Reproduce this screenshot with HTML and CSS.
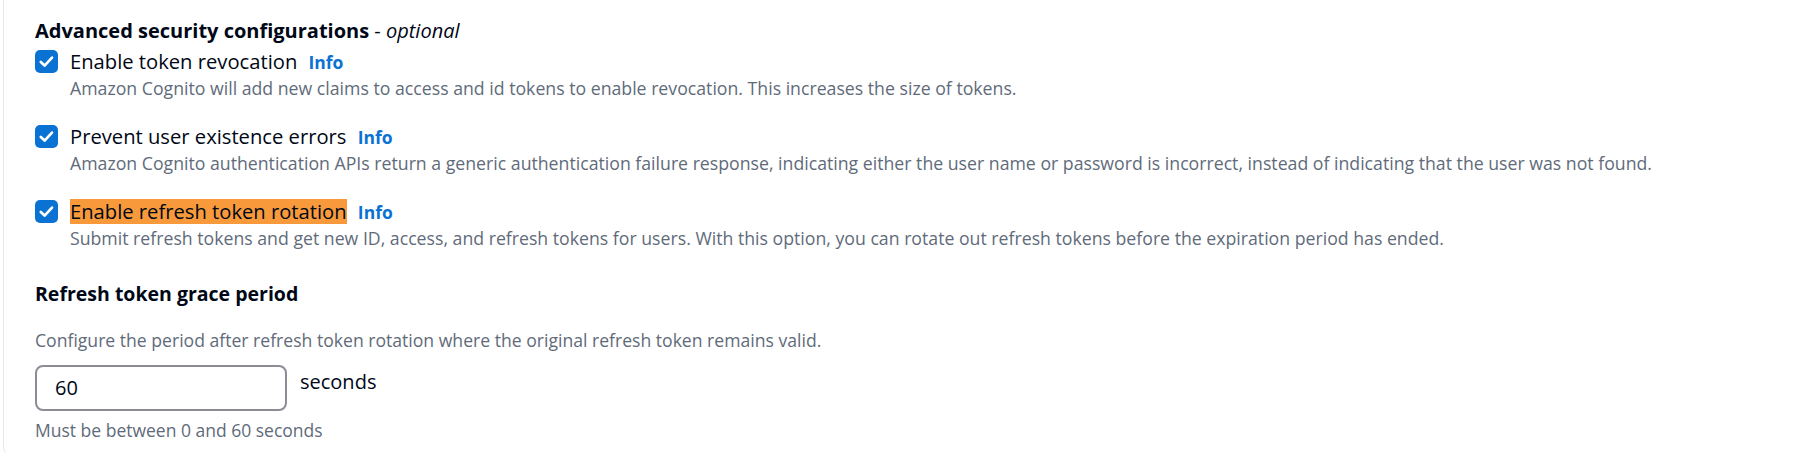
FILE: index.html
```html
<!DOCTYPE html>
<html>
<head>
<meta charset="utf-8">
<link rel="stylesheet" href="styles.css">
</head>
<body>
<div class="card">
  <div class="section-title"><b>Advanced security configurations</b> - <i>optional</i></div>

  <div class="option first">
    <span class="check"><svg viewBox="0 0 23 23" width="23" height="23"><path d="M5.8 12 L9.6 15.6 L17 7.6" fill="none" stroke="#fff" stroke-width="2.7" stroke-linecap="round" stroke-linejoin="round"/></svg></span>
    <div class="option-body">
      <div class="label">Enable token revocation <a class="info">Info</a></div>
      <div class="desc">Amazon Cognito will add new claims to access and id tokens to enable revocation. This increases the size of tokens.</div>
    </div>
  </div>

  <div class="option">
    <span class="check"><svg viewBox="0 0 23 23" width="23" height="23"><path d="M5.8 12 L9.6 15.6 L17 7.6" fill="none" stroke="#fff" stroke-width="2.7" stroke-linecap="round" stroke-linejoin="round"/></svg></span>
    <div class="option-body">
      <div class="label">Prevent user existence errors <a class="info">Info</a></div>
      <div class="desc">Amazon Cognito authentication APIs return a generic authentication failure response, indicating either the user name or password is incorrect, instead of indicating that the user was not found.</div>
    </div>
  </div>

  <div class="option">
    <span class="check"><svg viewBox="0 0 23 23" width="23" height="23"><path d="M5.8 12 L9.6 15.6 L17 7.6" fill="none" stroke="#fff" stroke-width="2.7" stroke-linecap="round" stroke-linejoin="round"/></svg></span>
    <div class="option-body">
      <div class="label"><span class="hl">Enable refresh token rotation</span> <a class="info">Info</a></div>
      <div class="desc">Submit refresh tokens and get new ID, access, and refresh tokens for users. With this option, you can rotate out refresh tokens before the expiration period has ended.</div>
    </div>
  </div>

  <div class="field">
    <div class="field-title">Refresh token grace period</div>
    <div class="field-desc">Configure the period after refresh token rotation where the original refresh token remains valid.</div>
    <div class="input-row">
      <div class="input">60</div>
      <span class="unit">seconds</span>
    </div>
    <div class="hint">Must be between 0 and 60 seconds</div>
  </div>
</div>
</body>
</html>
```

FILE: styles.css
```css
html, body {
  margin: 0;
  padding: 0;
  background: #ffffff;
}
body {
  font-family: "Open Sans", "Noto Sans", sans-serif;
  color: #000716;
}
.card {
  margin-left: 3px;
  border-left: 1px solid #e4e6e9;
  border-bottom: 1px solid transparent;
  border-bottom-left-radius: 8px;
  padding: 18px 0 0 31px;
  height: 436px;
}
.section-title {
  font-size: 20px;
  line-height: 26px;
}
.section-title b {
  font-weight: 700;
}
.section-title i {
  font-style: italic;
}
.option {
  display: flex;
  gap: 12px;
  margin-top: 23px;
}
.option.first {
  margin-top: 4px;
}
.check {
  width: 23px;
  height: 23px;
  border-radius: 5px;
  background: #0972d3;
  margin-top: 2px;
  flex: none;
  display: flex;
}
.label {
  font-size: 20.2px;
  line-height: 26px;
  color: #000716;
}
.hl {
  display: inline-block;
  background: #f89a3b;
  line-height: 25px;
}
.info {
  font-size: 17.5px;
  font-weight: 700;
  color: #0972d3;
  margin-left: 6px;
}
.desc {
  font-size: 17.7px;
  line-height: 24px;
  color: #5f6b7a;
  margin-top: 1px;
}
.field {
  margin-top: 31px;
}
.field-title {
  font-size: 19.5px;
  font-weight: 700;
  line-height: 26px;
}
.field-desc {
  font-size: 17.6px;
  line-height: 24px;
  color: #5f6b7a;
  margin-top: 21px;
}
.input-row {
  display: flex;
  align-items: flex-start;
  gap: 13px;
  margin-top: 13px;
}
.input {
  width: 252px;
  height: 46px;
  box-sizing: border-box;
  border: 2px solid #8c8c94;
  border-radius: 8px;
  padding-left: 18px;
  font-size: 20px;
  line-height: 42px;
}
.unit {
  font-size: 20px;
  line-height: 26px;
  padding-top: 4px;
}
.hint {
  font-size: 17.5px;
  line-height: 24px;
  color: #5f6b7a;
  margin-top: 7px;
}
```
